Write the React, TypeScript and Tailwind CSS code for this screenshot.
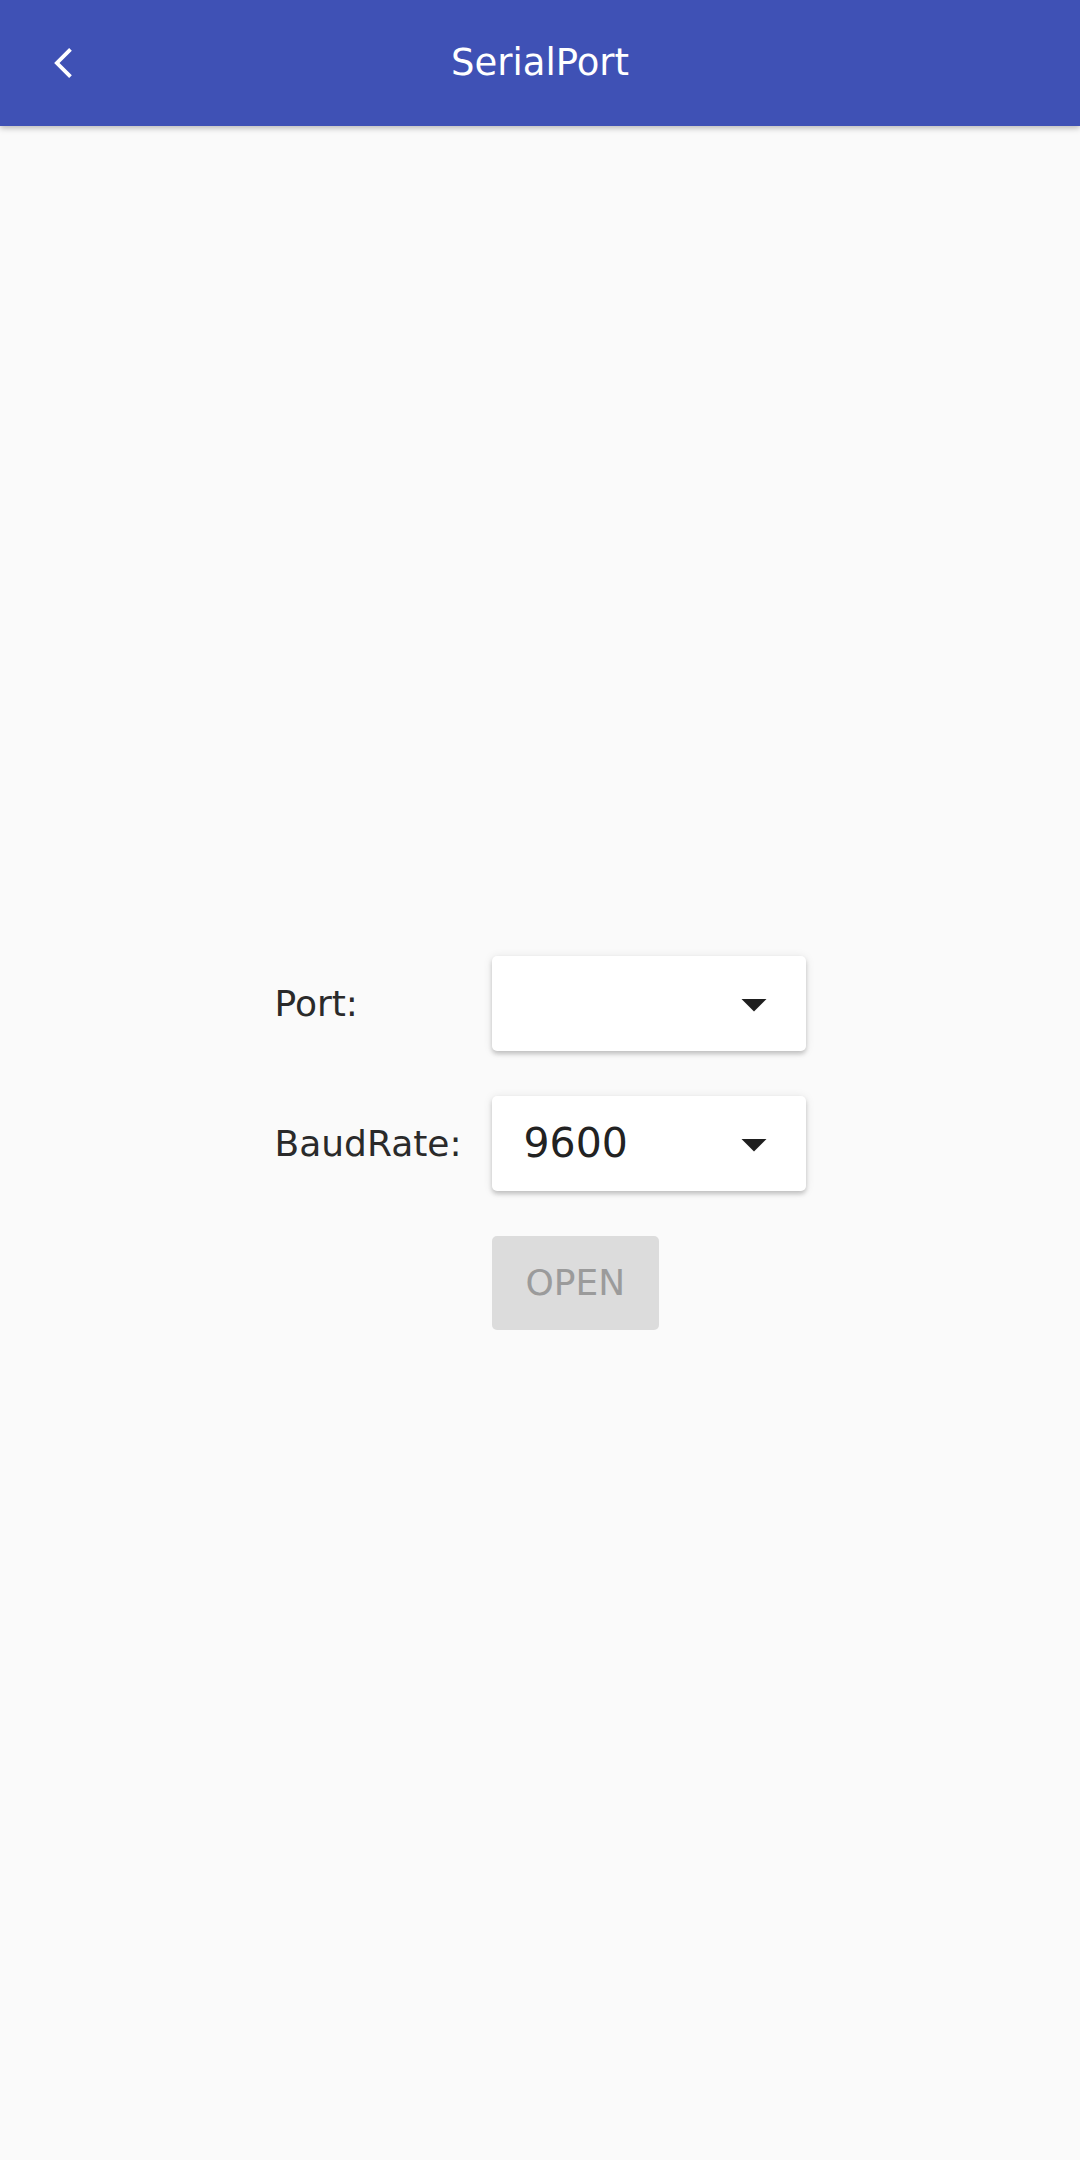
import React from "react";

const font = { fontFamily: '"DejaVu Sans", "Noto Sans", sans-serif' };

const ArrowDrop = () => (
  <svg width="60" height="60" viewBox="0 0 24 24" className="shrink-0">
    <path d="M7 10l5 5 5-5z" fill="#1f1f1f" />
  </svg>
);

const Select = ({ value }: { value?: string }) => (
  <div className="flex items-center justify-between w-[314px] h-[95px] bg-white rounded-[5px] pl-[32px] pr-[22px] shadow-[0_3px_4px_rgba(0,0,0,0.18),0_1px_10px_rgba(0,0,0,0.1)]">
    <span className="text-[41px] text-[#222]">{value ?? ""}</span>
    <ArrowDrop />
  </div>
);

const Row = ({ label, children }: { label: string; children: React.ReactNode }) => (
  <div className="flex items-center">
    <span className="w-[217px] text-[36px] text-[#2a2a2a]">{label}</span>
    {children}
  </div>
);

export default function App() {
  return (
    <div className="min-h-screen w-full flex flex-col bg-[#fafafa]" style={font}>
      <header className="relative z-10 h-[126px] shrink-0 bg-[#3f51b5] grid grid-cols-[120px_1fr_120px] items-center shadow-[0_2px_6px_rgba(0,0,0,0.28)]">
        <div className="pl-[54px] flex items-center">
          <svg width="18" height="30" viewBox="5.84 2.1 11.67 19.8">
            <path d="M17.51 3.87L15.73 2.1 5.84 12l9.9 9.9 1.77-1.77L9.38 12l8.13-8.13z" fill="#ffffff" />
          </svg>
        </div>
        <h1 className="text-center text-[37px] text-white">SerialPort</h1>
        <div />
      </header>

      <main className="flex-1 flex items-center justify-center">
        <div className="flex flex-col gap-[45px]">
          <Row label="Port:">
            <Select />
          </Row>
          <Row label="BaudRate:">
            <Select value="9600" />
          </Row>
          <div className="pl-[217px]">
            <button
              disabled
              className="h-[94px] px-[34px] rounded-[5px] bg-[#dcdcdc] text-[36px] text-[#9b9b9b]"
            >
              OPEN
            </button>
          </div>
        </div>
      </main>
    </div>
  );
}
